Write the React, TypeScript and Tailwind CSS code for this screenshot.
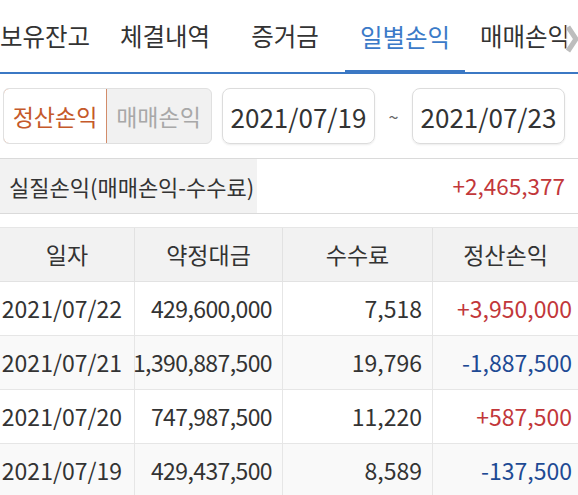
const font = { fontFamily: '"Noto Sans CJK KR", "Noto Sans", sans-serif' };

const tabs = ['보유잔고', '체결내역', '증거금', '일별손익', '매매손익'];

const rows = [
  { date: '2021/07/22', amount: '429,600,000', fee: '7,518', pl: '+3,950,000' },
  { date: '2021/07/21', amount: '1,390,887,500', fee: '19,796', pl: '-1,887,500' },
  { date: '2021/07/20', amount: '747,987,500', fee: '11,220', pl: '+587,500' },
  { date: '2021/07/19', amount: '429,437,500', fee: '8,589', pl: '-137,500' },
];

export default function App() {
  return (
    <div className="w-[578px] h-[495px] overflow-hidden bg-white text-[#333]" style={font}>
      {/* tab bar */}
      <div className="relative h-[74px] border-b-2 border-[#3b78c4]">
        <div className="flex ml-[-15px] h-full">
          {tabs.map((t, i) => (
            <div
              key={t}
              className={`w-[120px] shrink-0 flex items-center justify-center text-[24.5px] ${
                i === 3 ? 'text-[#3b7ac8] border-b-[4px] border-[#3b78c4] mb-[-2px] pt-[4px]' : ''
              }`}
            >
              {t}
            </div>
          ))}
        </div>
        <div className="absolute right-0 top-[25px] w-[12px] h-[28px] bg-white/60">
          <svg width="12" height="28" viewBox="0 0 12 28">
            <polyline points="2,2 10,14 2,26" fill="none" stroke="#bdbdbd" strokeWidth="5" />
          </svg>
        </div>
      </div>

      {/* filters */}
      <div className="flex items-center mt-[14px] h-[56px]">
        <div className="ml-[3px] flex h-full w-[209px] rounded-[6px] border border-[#e0e0e0] bg-[#f1f1f1] overflow-hidden">
          <div className="w-[104px] flex items-center justify-center bg-white border border-[#d28c6a] rounded-l-[6px] -m-px text-[23px] text-[#c5592a]">
            정산손익
          </div>
          <div className="flex-1 flex items-center justify-center text-[23px] text-[#a8a8a8]">매매손익</div>
        </div>
        <div className="ml-[10px] w-[153px] h-full rounded-[8px] border border-[#dcdcdc] shadow-[0_1px_2px_rgba(0,0,0,0.08)] flex items-center justify-center text-[26px]">
          2021/07/19
        </div>
        <div className="w-[37px] text-center text-[18px] text-[#666]">~</div>
        <div className="w-[153px] h-full rounded-[8px] border border-[#dcdcdc] shadow-[0_1px_2px_rgba(0,0,0,0.08)] flex items-center justify-center text-[26px]">
          2021/07/23
        </div>
      </div>

      {/* summary */}
      <div className="flex mt-[14px] h-[56px] border-y border-[#dadada]">
        <div className="w-[257px] bg-[#f2f2f2] flex items-center pl-[9px] text-[22px]">실질손익(매매손익-수수료)</div>
        <div className="flex-1 flex items-center justify-end pr-[13px] text-[22.5px] text-[#c2373a]">+2,465,377</div>
      </div>

      {/* table */}
      <div className="mt-[13px] border-t border-[#e6e6e6]">
        <div className="flex h-[54px] bg-[#f2f2f2] border-b border-[#e2e2e2] text-[23px]">
          <div className="w-[135px] flex items-center justify-center border-r border-[#e2e2e2]">일자</div>
          <div className="w-[148px] flex items-center justify-center border-r border-[#e2e2e2]">약정대금</div>
          <div className="w-[150px] flex items-center justify-center border-r border-[#e2e2e2]">수수료</div>
          <div className="flex-1 flex items-center justify-center">정산손익</div>
        </div>
        {rows.map((r, i) => (
          <div
            key={r.date}
            className={`flex h-[54px] border-b border-[#e6e6e6] text-[23px] whitespace-nowrap ${i % 2 === 1 ? 'bg-[#f9f9f9]' : 'bg-white'}`}
          >
            <div className="w-[135px] flex items-center justify-end pr-[12px] border-r border-[#e6e6e6]">{r.date}</div>
            <div className="w-[148px] flex items-center justify-end pr-[10px] border-r border-[#e6e6e6] tracking-[-0.6px]">
              {r.amount}
            </div>
            <div className="w-[150px] flex items-center justify-end pr-[10px] border-r border-[#e6e6e6]">{r.fee}</div>
            <div
              className={`flex-1 flex items-center justify-end pr-[6px] ${
                r.pl.startsWith('+') ? 'text-[#c2373a]' : 'text-[#1e4a94]'
              }`}
            >
              {r.pl}
            </div>
          </div>
        ))}
      </div>
    </div>
  );
}
